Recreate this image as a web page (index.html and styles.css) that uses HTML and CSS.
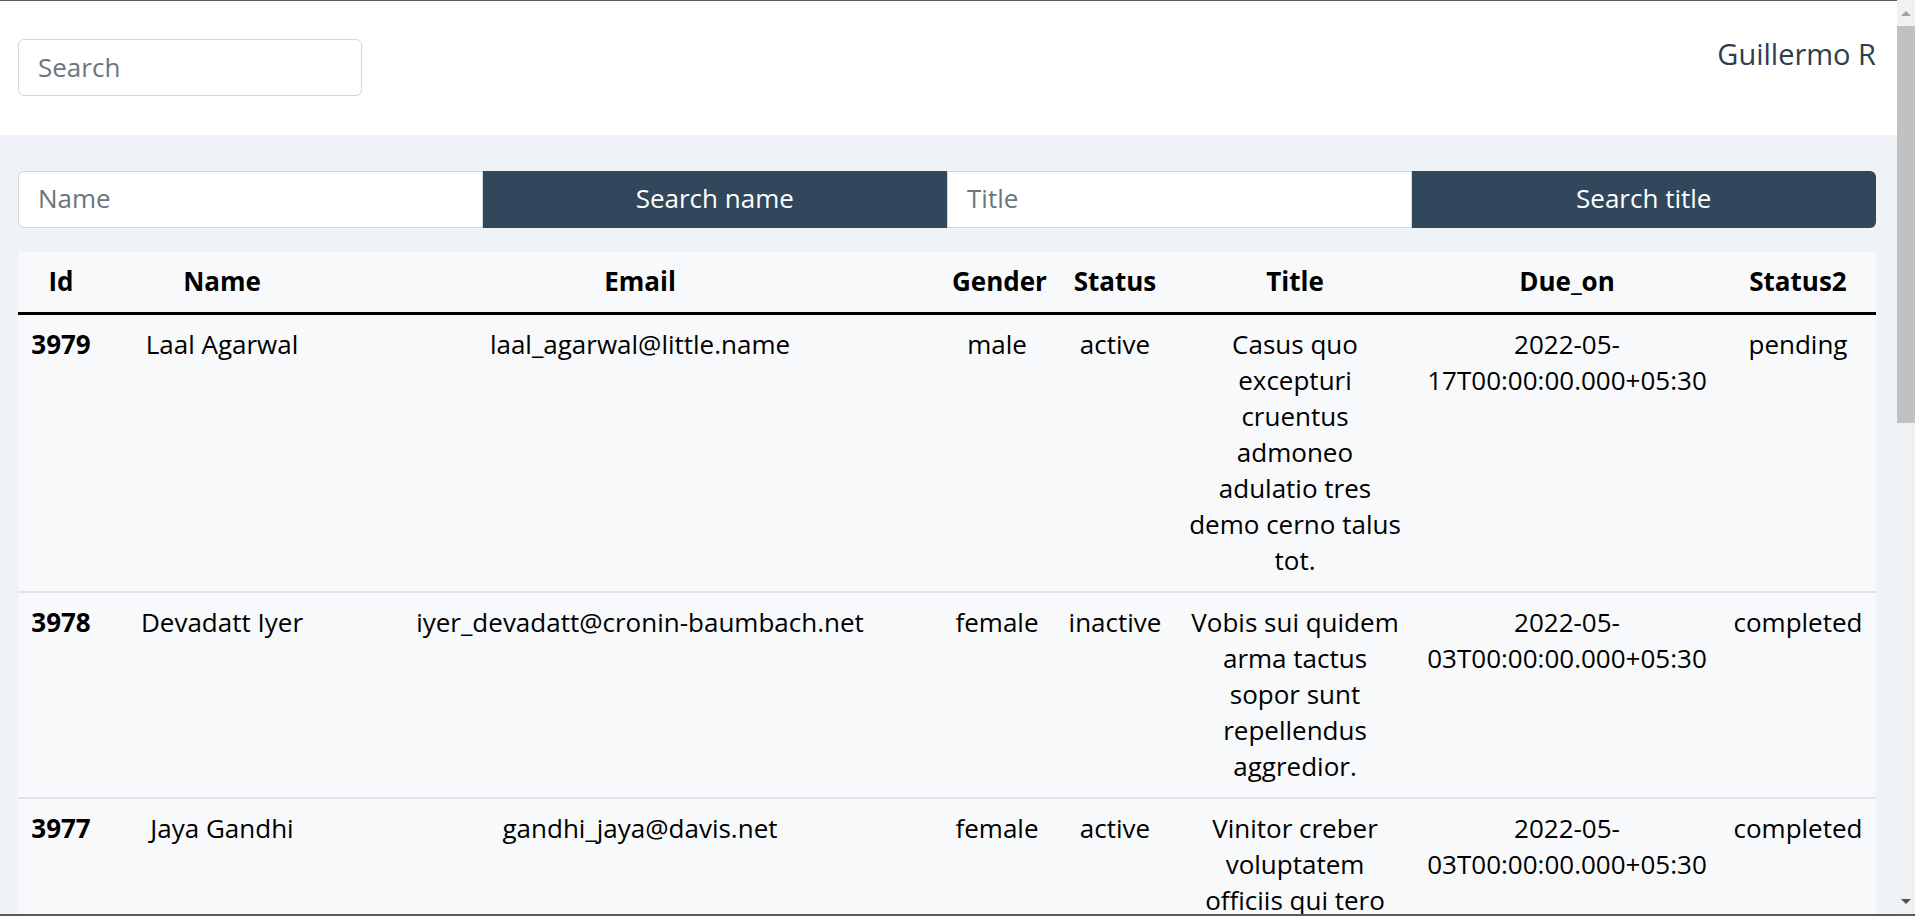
FILE: index.html
```html
<!DOCTYPE html>
<html lang="en">
<head>
<meta charset="utf-8">
<title>Users</title>
<link rel="stylesheet" href="styles.css">
</head>
<body>
<header class="topbar">
  <input class="search" type="text" placeholder="Search">
  <span class="user">Guillermo R</span>
</header>
<main class="content">
  <div class="filters">
    <input class="filter-input first" type="text" placeholder="Name">
    <button class="filter-btn" type="button">Search name</button>
    <input class="filter-input" type="text" placeholder="Title">
    <button class="filter-btn last" type="button">Search title</button>
  </div>
  <table class="users">
    <colgroup>
      <col class="c-id"><col class="c-name"><col class="c-email"><col class="c-gender">
      <col class="c-status"><col class="c-title"><col class="c-due"><col class="c-status2">
    </colgroup>
    <thead>
      <tr><th>Id</th><th>Name</th><th>Email</th><th>Gender</th><th>Status</th><th>Title</th><th>Due_on</th><th>Status2</th></tr>
    </thead>
    <tbody>
      <tr>
        <td class="id">3979</td><td>Laal Agarwal</td><td>laal_agarwal@little.name</td><td>male</td><td>active</td>
        <td>Casus quo excepturi cruentus admoneo adulatio tres demo cerno talus tot.</td>
        <td>2022-05-17T00:00:00.000+05:30</td><td>pending</td>
      </tr>
      <tr>
        <td class="id">3978</td><td>Devadatt Iyer</td><td>iyer_devadatt@cronin-baumbach.net</td><td>female</td><td>inactive</td>
        <td>Vobis sui quidem arma tactus sopor sunt repellendus aggredior.</td>
        <td>2022-05-03T00:00:00.000+05:30</td><td>completed</td>
      </tr>
      <tr>
        <td class="id">3977</td><td>Jaya Gandhi</td><td>gandhi_jaya@davis.net</td><td>female</td><td>active</td>
        <td>Vinitor creber voluptatem officiis qui tero</td>
        <td>2022-05-03T00:00:00.000+05:30</td><td>completed</td>
      </tr>
    </tbody>
  </table>
</main>
<div class="scrollbar" aria-hidden="true">
  <span class="sb-arrow up"></span>
  <span class="sb-thumb"></span>
  <span class="sb-arrow down"></span>
</div>
<div class="frame-bottom"></div>
</body>
</html>
```
FILE: styles.css
```css
* { box-sizing: border-box; }

html, body {
  margin: 0;
  padding: 0;
}

body {
  font-family: "Open Sans", "Noto Sans", sans-serif;
  font-size: 26px;
  line-height: 36px;
  color: #000;
  background: #eff2f6;
  padding-right: 18px;
}

.topbar {
  height: 135px;
  background: #fff;
  border-top: 1px solid #5b5b5b;
  display: flex;
  justify-content: space-between;
  align-items: flex-start;
  padding: 0 21px 0 18px;
}

.search {
  margin-top: 38px;
  width: 344px;
  height: 57px;
  border: 1px solid #d3d6dc;
  border-radius: 6px;
  padding: 0 19px 2px;
  font-family: inherit;
  font-size: 26px;
  color: #212529;
  background: #fff;
  outline: none;
}

.search::placeholder,
.filter-input::placeholder {
  color: #6c757d;
}

.user {
  margin-top: 31px;
  font-size: 29px;
  line-height: 44px;
  color: #2c3e50;
}

.content {
  padding: 36px 21px 0 18px;
  min-height: 1855px;
}

.filters {
  display: grid;
  grid-template-columns: repeat(4, 1fr);
  height: 57px;
}

.filter-input {
  height: 57px;
  border: 1px solid #d3d6dc;
  border-radius: 0;
  padding: 0 19px 4px;
  font-family: inherit;
  font-size: 26px;
  background: #fff;
  outline: none;
  min-width: 0;
}

.filter-input.first { border-radius: 6px 0 0 6px; }

.filter-btn {
  height: 57px;
  border: none;
  background: #30475c;
  color: #fff;
  font-family: inherit;
  font-size: 26px;
  padding: 0 0 4px;
  cursor: pointer;
}

.filter-btn.last { border-radius: 0 6px 6px 0; }

.users {
  margin-top: 24px;
  width: 100%;
  border-collapse: collapse;
  table-layout: fixed;
  background: #f7f9fb;
}

.c-id { width: 86px; }
.c-name { width: 236px; }
.c-email { width: 600px; }
.c-gender { width: 114px; }
.c-status { width: 122px; }
.c-title { width: 238px; }
.c-due { width: 306px; }
.c-status2 { width: 156px; }

.users th {
  padding: 11px 12px 13px;
  font-weight: 700;
  text-align: center;
  border-bottom: 3px solid #000;
}

.users td {
  padding: 11px 12px 13px;
  text-align: center;
  vertical-align: top;
  border-bottom: 2px solid #e1e4e8;
}

.users td.id { font-weight: 700; }

/* browser scrollbar as seen in the capture */
.scrollbar {
  position: fixed;
  top: 1px;
  right: 0;
  bottom: 0;
  width: 18px;
  background: #f1f1f1;
  display: flex;
  flex-direction: column;
  align-items: stretch;
}

.sb-arrow {
  height: 25px;
  display: flex;
  align-items: center;
  justify-content: center;
}

.sb-arrow::before {
  content: "";
  width: 0;
  height: 0;
  border-left: 5px solid transparent;
  border-right: 5px solid transparent;
}

.sb-arrow.up::before { border-bottom: 5px solid #a3a3a3; }
.sb-arrow.down::before { border-top: 5px solid #505050; }

.sb-thumb {
  height: 397px;
  background: #c1c1c1;
}

.sb-arrow.down { margin-top: auto; margin-bottom: 2px; }

.frame-bottom {
  position: fixed;
  left: 0;
  right: 0;
  bottom: 0;
  height: 2px;
  background: #5a5a5a;
  z-index: 2;
}
```
